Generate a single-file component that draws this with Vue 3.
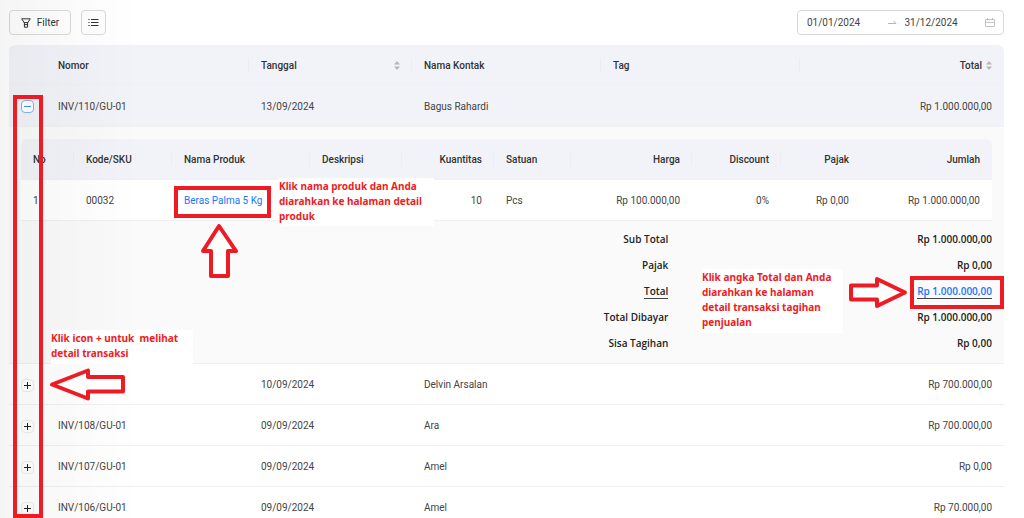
<script setup>
import { ref } from 'vue'

const startDate = ref('01/01/2024')
const endDate = ref('31/12/2024')

const invoices = [
  { number: 'INV/110/GU-01', date: '13/09/2024', contact: 'Bagus Rahardi', total: 'Rp 1.000.000,00', open: true },
  { number: '', date: '10/09/2024', contact: 'Delvin Arsalan', total: 'Rp 700.000,00' },
  { number: 'INV/108/GU-01', date: '09/09/2024', contact: 'Ara', total: 'Rp 700.000,00' },
  { number: 'INV/107/GU-01', date: '09/09/2024', contact: 'Amel', total: 'Rp 0,00' },
  { number: 'INV/106/GU-01', date: '09/09/2024', contact: 'Amel', total: 'Rp 70.000,00' },
]

const summary = [
  { label: 'Sub Total', value: 'Rp 1.000.000,00' },
  { label: 'Pajak', value: 'Rp 0,00' },
  { label: 'Total', value: 'Rp 1.000.000,00', link: true },
  { label: 'Total Dibayar', value: 'Rp 1.000.000,00' },
  { label: 'Sisa Tagihan', value: 'Rp 0,00' },
]
</script>

<template>
  <main class="page">
    <div class="toolbar">
      <button class="btn btn-filter" type="button">
        <svg width="10" height="10" viewBox="0 0 10 10" fill="none" stroke="currentColor" stroke-width="1">
          <path d="M0.7 0.8H9.3L6.6 5V9.2H3.4V5Z" stroke-linejoin="round" />
          <path d="M3.4 6.6H6.6M3 4.6H7" />
        </svg>
        <span>Filter</span>
      </button>
      <button class="btn btn-list" type="button" aria-label="Kolom">
        <svg width="11" height="10" viewBox="0 0 11 10" fill="none" stroke="currentColor" stroke-width="1">
          <path d="M3 1.5H10.5M3 4.5H10.5M3 7.5H10.5" />
          <path d="M0.4 1.5H1.6M0.4 4.5H1.6M0.4 7.5H1.6" />
        </svg>
      </button>
      <div class="range">
        <input v-model="startDate" type="text" aria-label="Tanggal mulai" />
        <svg width="9" height="6" viewBox="0 0 9 6" fill="none" stroke="#b5b5b5" stroke-width="1">
          <path d="M0 3.5H8L5.6 1" />
        </svg>
        <input v-model="endDate" type="text" aria-label="Tanggal akhir" />
        <svg class="calendar" width="10" height="10" viewBox="0 0 10 10" fill="none" stroke="#c4c4c4" stroke-width="1">
          <path d="M0.5 1.5H9.5V8.5H0.5ZM0.5 4.5H9.5M2.5 0V2.5M7.5 0V2.5" />
        </svg>
      </div>
    </div>

    <table class="grid outer">
      <colgroup>
        <col class="o-toggle" /><col class="o-number" /><col class="o-date" />
        <col class="o-contact" /><col class="o-tag" /><col />
      </colgroup>
      <thead>
        <tr>
          <th></th>
          <th class="sep">Nomor</th>
          <th class="sep">
            <div class="sortable">
              <span>Tanggal</span>
              <svg width="6" height="9" viewBox="0 0 6 9" fill="#b3b5ba"><path d="M3 0L6 3.6H0ZM3 9L0 5.4H6Z" /></svg>
            </div>
          </th>
          <th class="sep">Nama Kontak</th>
          <th class="sep">Tag</th>
          <th>
            <div class="sortable end">
              <span>Total</span>
              <svg width="6" height="9" viewBox="0 0 6 9" fill="#b3b5ba"><path d="M3 0L6 3.6H0ZM3 9L0 5.4H6Z" /></svg>
            </div>
          </th>
        </tr>
      </thead>
      <tbody>
        <template v-for="(row, i) in invoices" :key="i">
          <tr :class="{ selected: row.open }">
            <td class="toggle-cell">
              <button class="toggle" :class="{ open: row.open }" type="button" :aria-expanded="!!row.open" aria-label="Detail transaksi">
                <svg width="11" height="11" viewBox="0 0 11 11" fill="none" stroke="currentColor" stroke-width="1">
                  <path d="M2 5.5H9" />
                  <path v-if="!row.open" d="M5.5 2V9" />
                </svg>
              </button>
            </td>
            <td>{{ row.number }}</td>
            <td>{{ row.date }}</td>
            <td>{{ row.contact }}</td>
            <td></td>
            <td class="num">{{ row.total }}</td>
          </tr>
          <tr v-if="row.open">
            <td colspan="6" class="detail">
              <table class="grid inner">
                <colgroup>
                  <col class="i-no" /><col class="i-sku" /><col class="i-name" /><col class="i-desc" /><col class="i-qty" />
                  <col class="i-unit" /><col class="i-price" /><col class="i-disc" /><col class="i-tax" /><col />
                </colgroup>
                <thead>
                  <tr>
                    <th class="sep">No</th>
                    <th class="sep">Kode/SKU</th>
                    <th class="sep">Nama Produk</th>
                    <th class="sep">Deskripsi</th>
                    <th class="sep num">Kuantitas</th>
                    <th class="sep">Satuan</th>
                    <th class="sep num">Harga</th>
                    <th class="sep num">Discount</th>
                    <th class="num">Pajak</th>
                    <th class="num">Jumlah</th>
                  </tr>
                </thead>
                <tbody>
                  <tr>
                    <td>1</td>
                    <td>00032</td>
                    <td><a href="#produk">Beras Palma 5 Kg</a></td>
                    <td></td>
                    <td class="num">10</td>
                    <td>Pcs</td>
                    <td class="num">Rp 100.000,00</td>
                    <td class="num">0%</td>
                    <td class="num">Rp 0,00</td>
                    <td class="num">Rp 1.000.000,00</td>
                  </tr>
                </tbody>
              </table>
              <dl class="summary">
                <div v-for="line in summary" :key="line.label">
                  <dt><span :class="{ underlined: line.link }">{{ line.label }}</span></dt>
                  <dd>
                    <a v-if="line.link" class="underlined" href="#tagihan">{{ line.value }}</a>
                    <template v-else>{{ line.value }}</template>
                  </dd>
                </div>
              </dl>
            </td>
          </tr>
        </template>
      </tbody>
    </table>

    <div class="shade"></div>

    <div class="frame frame-toggle"></div>
    <div class="frame frame-product"></div>
    <div class="frame frame-total"></div>

    <p class="note note-product">Klik nama produk dan Anda<br />diarahkan ke halaman detail<br />produk</p>
    <p class="note note-total">Klik angka Total dan Anda<br />diarahkan ke halaman<br />detail transaksi tagihan<br />penjualan</p>
    <p class="note note-toggle">Klik icon + untuk &nbsp;melihat<br />detail transaksi</p>

    <svg class="arrow arrow-up" width="39" height="56" viewBox="0 0 39 56">
      <path d="M19 3L36 28H28V53H11V28H3Z" />
    </svg>
    <svg class="arrow arrow-right" width="60" height="35" viewBox="0 0 60 35">
      <path d="M3 10.5H29V4L57 17.5L29 31V24.5H3Z" />
    </svg>
    <svg class="arrow arrow-left" width="76" height="35" viewBox="0 0 76 35">
      <path d="M2 17.5L38 3.5V10H73V24.5H38V31.5Z" />
    </svg>
  </main>
</template>

<style>
body {
  margin: 0;
  background: #fff;
}
</style>

<style scoped>
.page {
  position: relative;
  box-sizing: border-box;
  height: 100vh;
  overflow: hidden;
  padding: 10px 20px 0 9px;
  font-family: Roboto, "Open Sans", sans-serif;
  font-size: 10px;
  line-height: 14px;
  color: #444;
}
.toolbar {
  display: flex;
  gap: 10px;
  margin-bottom: 10px;
}
.btn,
.range {
  box-sizing: border-box;
  height: 25px;
  border: 1px solid #d9d9d9;
  border-radius: 4px;
  background: #fff;
  display: flex;
  align-items: center;
}
.btn {
  justify-content: center;
  gap: 6px;
  padding: 0;
  font: inherit;
  color: #333;
}
.btn-filter { width: 62px; }
.btn-list { width: 25px; }
.range {
  width: 207px;
  margin-left: auto;
  padding: 0 8px 0 9px;
}
.range input {
  width: 75px;
  min-width: 0;
  margin-right: 8px;
  padding: 0;
  border: 0;
  outline: 0;
  background: none;
  font: inherit;
  color: #444;
}
.range svg { flex: none; margin-right: 8px; }
.range .calendar { margin: 0 0 0 auto; }

.grid {
  width: 100%;
  table-layout: fixed;
  border-collapse: separate;
  border-spacing: 0;
}
.grid th,
.grid td {
  box-sizing: border-box;
  height: 41px;
  padding: 2px 12px 0;
  border-bottom: 1px solid #f0f0f0;
  text-align: left;
  white-space: nowrap;
}
.grid th {
  position: relative;
  background: #f1f3f8;
  font-weight: 500;
  color: #333;
}
.grid .num { text-align: right; }
.sep::after {
  content: "";
  position: absolute;
  top: 13px;
  right: 0;
  width: 1px;
  height: 14px;
  background: #ebedf2;
}
.outer > thead th { height: 40px; }
.outer > thead th:first-child,
.inner th:first-child { border-top-left-radius: 6px; }
.outer > thead th:last-child,
.inner th:last-child { border-top-right-radius: 6px; }
.selected td {
  height: 42px;
  background: #f1f3f8;
}
.o-toggle { width: 37px; }
.o-number { width: 203px; }
.o-date { width: 163px; }
.o-contact { width: 189px; }
.o-tag { width: 199px; }
.i-no { width: 53px; }
.i-sku { width: 98px; }
.i-name { width: 138px; }
.i-desc { width: 92px; }
.i-qty { width: 92px; }
.i-unit { width: 77px; }
.i-price { width: 121px; }
.i-disc { width: 89px; }
.i-tax { width: 80px; }
.sortable {
  display: flex;
  align-items: center;
  justify-content: space-between;
}
.sortable.end {
  justify-content: flex-end;
  gap: 4px;
}
.grid .toggle-cell { padding: 2px 0 0 12px; }
.toggle {
  display: flex;
  box-sizing: border-box;
  width: 13px;
  height: 13px;
  padding: 0;
  border: 1px solid #ececec;
  border-radius: 4px;
  background: #fff;
  color: #222;
}
.toggle.open {
  border-color: #7fb4fb;
  color: #3f8ffa;
}
.grid .detail {
  padding: 12px 12px 7px;
  background: #fafafa;
}
.inner td { background: #fff; }
a {
  color: #1677ff;
  text-decoration: none;
}
.summary {
  margin: 5px 0 0;
  font-family: "Open Sans", sans-serif;
  font-weight: 600;
  color: #222;
}
.summary div {
  display: flex;
  align-items: center;
  height: 26px;
}
.summary dt {
  flex: 2;
  text-align: right;
}
.summary dd {
  flex: 1;
  margin: 0;
  text-align: right;
}
.underlined {
  display: inline-block;
  border-bottom: 1px solid #444;
}

.shade {
  position: absolute;
  inset: 0 auto 0 0;
  width: 140px;
  background: linear-gradient(to right, rgba(0, 0, 0, 0.04), rgba(0, 0, 0, 0));
  pointer-events: none;
}
.frame {
  position: absolute;
  box-sizing: border-box;
  border: 4px solid #ed1c24;
  pointer-events: none;
}
.frame-toggle { left: 13px; top: 95px; width: 30px; height: 423px; }
.frame-product { left: 174px; top: 186px; width: 97px; height: 32px; }
.frame-total { left: 910px; top: 276px; width: 94px; height: 33px; }
.note {
  position: absolute;
  box-sizing: border-box;
  margin: 0;
  padding-top: 1px;
  background: #fff;
  font-family: "Noto Sans", "Open Sans", sans-serif;
  font-size: 10px;
  font-weight: 700;
  line-height: 15px;
  white-space: nowrap;
  color: #ed1c24;
}
.note-product { left: 279px; top: 178px; width: 155px; height: 48px; }
.note-total { left: 702px; top: 269px; width: 141px; height: 64px; }
.note-toggle { left: 51px; top: 330px; width: 142px; height: 34px; }
.arrow {
  position: absolute;
  fill: #fff;
  stroke: #ed1c24;
  stroke-width: 4;
  stroke-linejoin: round;
}
.arrow-up { left: 200px; top: 223px; }
.arrow-right { left: 848px; top: 275px; }
.arrow-left { left: 50px; top: 367px; }
</style>
